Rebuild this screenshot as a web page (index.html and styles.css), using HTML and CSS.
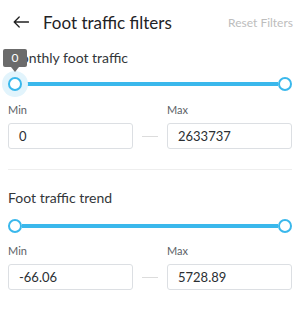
FILE: index.html
```html
<!DOCTYPE html>
<html>
<head>
<meta charset="utf-8">
<link rel="stylesheet" href="styles.css">
</head>
<body>
<div class="page">
  <header class="header">
    <svg class="back" width="16" height="12" viewBox="0 0 16 12"><path d="M15.5 6H1.2M6.2 1L1.2 6l5 5" fill="none" stroke="#222" stroke-width="1.3" stroke-linecap="round" stroke-linejoin="round"/></svg>
    <h1 class="title">Foot traffic filters</h1>
    <span class="reset">Reset Filters</span>
  </header>

  <section class="section">
    <h2 class="section-title">Monthly foot traffic</h2>
    <div class="slider">
      <span class="thumb thumb-active"><span class="tip">0</span></span>
      <span class="track"></span>
      <span class="thumb"></span>
    </div>
    <div class="range">
      <div class="field"><span class="label">Min</span><div class="input">0</div></div>
      <div class="dash"></div>
      <div class="field"><span class="label">Max</span><div class="input">2633737</div></div>
    </div>
  </section>

  <hr class="divider">

  <section class="section section-second">
    <h2 class="section-title">Foot traffic trend</h2>
    <div class="slider">
      <span class="thumb"></span>
      <span class="track"></span>
      <span class="thumb"></span>
    </div>
    <div class="range">
      <div class="field"><span class="label">Min</span><div class="input">-66.06</div></div>
      <div class="dash"></div>
      <div class="field"><span class="label">Max</span><div class="input">5728.89</div></div>
    </div>
  </section>
</div>
</body>
</html>
```

FILE: styles.css
```css
* { box-sizing: border-box; }
html, body { margin: 0; background: #fff; }
body { font-family: "Lato", "Noto Sans", sans-serif; color: #2b2f33; }
.page { width: 300px; padding: 0 8px; }

.header { height: 44px; display: flex; align-items: center; }
.back { margin-left: 5px; flex: none; }
.title { margin: 2px 0 0 14px; font-size: 17px; font-weight: 400; color: #1f2326; line-height: 22px; }
.reset { margin-left: auto; margin-right: -1px; font-size: 12px; color: #bdbdbd; }

.section { display: flex; flex-direction: column; }
.section-title { margin: 4px 0 0; font-size: 14px; font-weight: 400; line-height: 20px; color: #33373a; }

.slider { margin-top: 9px; height: 14px; display: flex; align-items: center; }
.track { flex: 1; height: 4px; background: #3ab8ec; }
.thumb { position: relative; flex: none; width: 14px; height: 14px; border-radius: 50%; border: 2px solid #3ab8ec; background: #fff; }
.thumb-active { box-shadow: 0 0 0 6px #e2f4fc; }
.tip { position: absolute; left: -7px; bottom: 22px; width: 24px; height: 18px; border-radius: 2px; background: #6b6b6b; color: #fff; font-size: 12px; line-height: 18px; text-align: center; }
.tip::after { content: ""; position: absolute; left: 8px; top: 18px; border-style: solid; border-width: 5px 4px 0; border-color: #6b6b6b transparent transparent; }

.range { margin-top: 12px; display: grid; grid-template-columns: 1fr 34px 1fr; align-items: end; }
.field { display: flex; flex-direction: column; }
.label { font-size: 11px; line-height: 14px; color: #5c6166; }
.input { margin-top: 6px; height: 26px; border: 1px solid #dcdfe3; border-radius: 3px; padding-left: 10px; font-size: 13px; line-height: 24px; color: #2b2f33; }
.dash { height: 1px; width: 16px; margin: 0 auto 12px; background: #dcdcdc; }

.divider { margin: 20px 0 0; border: 0; height: 1px; background: #eeeeee; }
.section-second .section-title { margin-top: 18px; }
.section-second .slider { margin-top: 11px; }
.section-second .range { margin-top: 11px; }
.section-second .input { margin-top: 6px; }
```
